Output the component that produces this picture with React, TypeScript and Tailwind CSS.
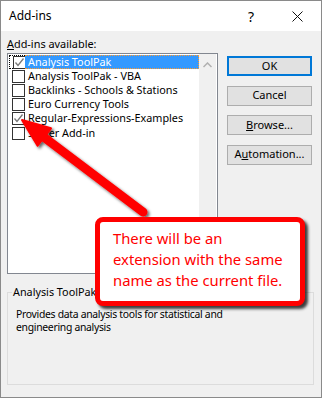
import React from 'react';

const rows = [
  { name: 'Analysis ToolPak', checked: true, selected: true },
  { name: 'Analysis ToolPak - VBA', checked: false },
  { name: 'Backlinks - Schools & Stations', checked: false },
  { name: 'Euro Currency Tools', checked: false },
  { name: 'Regular-Expressions-Examples', checked: true },
  { name: 'Solver Add-in', checked: false },
];

const Check: React.FC<{ on: boolean }> = ({ on }) => (
  <div className="w-[13px] h-[13px] border border-[#333] bg-white flex items-center justify-center">
    {on && (
      <svg width="11" height="11" viewBox="0 0 11 11">
        <path d="M1.5 5.5 L4 8.5 L9.5 1.5" fill="none" stroke="#777" strokeWidth="1.3" />
      </svg>
    )}
  </div>
);

const Button: React.FC<{ children: React.ReactNode; primary?: boolean }> = ({ children, primary }) => (
  <div
    className={
      'h-[20px] flex items-center justify-center bg-[#e1e1e1] ' +
      (primary ? 'border-2 border-[#0078d7]' : 'border border-[#adadad]')
    }
  >
    {children}
  </div>
);

export default function App() {
  return (
    <div
      className="relative w-[322px] h-[398px] border border-[#8a8a8a] bg-[#f0f0f0] text-[11px] text-black overflow-hidden"
      style={{ fontFamily: '"Noto Sans", "Open Sans", sans-serif' }}
    >
      {/* title bar */}
      <div className="h-[30px] bg-white flex items-center pl-[8px]">
        <span className="text-[12px]">Add-ins</span>
        <span className="ml-auto w-[20px] text-center text-[14px]">?</span>
        <svg className="ml-[31px] mr-[18px]" width="11" height="11" viewBox="0 0 11 11">
          <path d="M0.5 0.5 L10.5 10.5 M10.5 0.5 L0.5 10.5" stroke="#111" strokeWidth="1" />
        </svg>
      </div>

      <div className="px-[6px]">
        <div className="h-[22px] pt-[5px] leading-[16px] text-[10.9px]">
          <span className="underline">A</span>dd-ins available:
        </div>

        <div className="flex gap-[9px]">
          {/* list */}
          <div className="w-[211px] h-[221px] border border-[#828790] bg-white flex p-px">
            <div className="flex-1 flex flex-col">
              {rows.map((r) => (
                <div key={r.name} className="h-[14.2px] flex">
                  <div
                    className={
                      'w-[16px] flex items-center pl-[3px] ' +
                      (r.selected ? 'border border-r-0 border-dotted border-black pl-[2px]' : '')
                    }
                  >
                    <Check on={r.checked} />
                  </div>
                  <div
                    className={
                      'flex-1 flex items-center pl-[3px] whitespace-nowrap leading-none text-[10.8px] ' +
                      (r.selected ? 'bg-[#3399ff] text-white border border-l-0 border-dotted border-[#ff9a2e]' : '')
                    }
                  >
                    {r.name}
                  </div>
                </div>
              ))}
            </div>
            <div className="w-[17px] -my-px bg-[#f0f0f0] flex flex-col items-center pt-[8px]">
              <svg width="9" height="6" viewBox="0 0 9 6">
                <path d="M0.5 5 L4.5 1 L8.5 5" fill="none" stroke="#b0b0b0" strokeWidth="1.5" />
              </svg>
            </div>
          </div>

          {/* buttons */}
          <div className="w-[85px] flex flex-col gap-[9.5px] pt-[3px]">
            <Button primary>OK</Button>
            <Button>Cancel</Button>
            <Button>
              <span>
                <span className="underline">B</span>rowse...
              </span>
            </Button>
            <Button>
              <span>
                A<span className="underline">u</span>tomation...
              </span>
            </Button>
          </div>
        </div>

        <fieldset className="mt-[11px] w-[307px] h-[100px] border border-[#dcdcdc] pl-[8px]">
          <legend className="ml-[-4px] px-px leading-[14px] text-[10.8px]">Analysis ToolPak</legend>
          <p className="mt-[9px] leading-[13px] text-[10.4px] tracking-[-0.3px]">
            Provides data analysis tools for statistical and
            <br />
            engineering analysis
          </p>
        </fieldset>
      </div>

      {/* red arrow */}
      <svg className="absolute left-0 top-0 pointer-events-none" width="322" height="398">
        <defs>
          <filter id="sh" x="-20%" y="-20%" width="140%" height="140%">
            <feDropShadow dx="2" dy="2" stdDeviation="1.5" floodColor="#000" floodOpacity="0.6" />
          </filter>
        </defs>
        <g filter="url(#sh)" fill="#ff0000" stroke="#ff0000">
          <line x1="40" y1="134" x2="142" y2="211" strokeWidth="9" strokeLinecap="round" />
          <polygon points="21,119 36.6,144.7 50,127.3" strokeWidth="2" strokeLinejoin="round" />
        </g>
      </svg>

      {/* callout */}
      <div className="absolute left-[94px] top-[216px] w-[210px] h-[89px] border-[5px] border-[#ff0000] rounded-[8px] bg-white shadow-[3px_3px_3px_rgba(0,0,0,0.75)] pl-[13px] pt-[6px] text-[#ff0000] text-[14.8px] leading-[21px]">
        There will be an
        <br />
        extension with the same
        <br />
        name as the current file.
      </div>
    </div>
  );
}
